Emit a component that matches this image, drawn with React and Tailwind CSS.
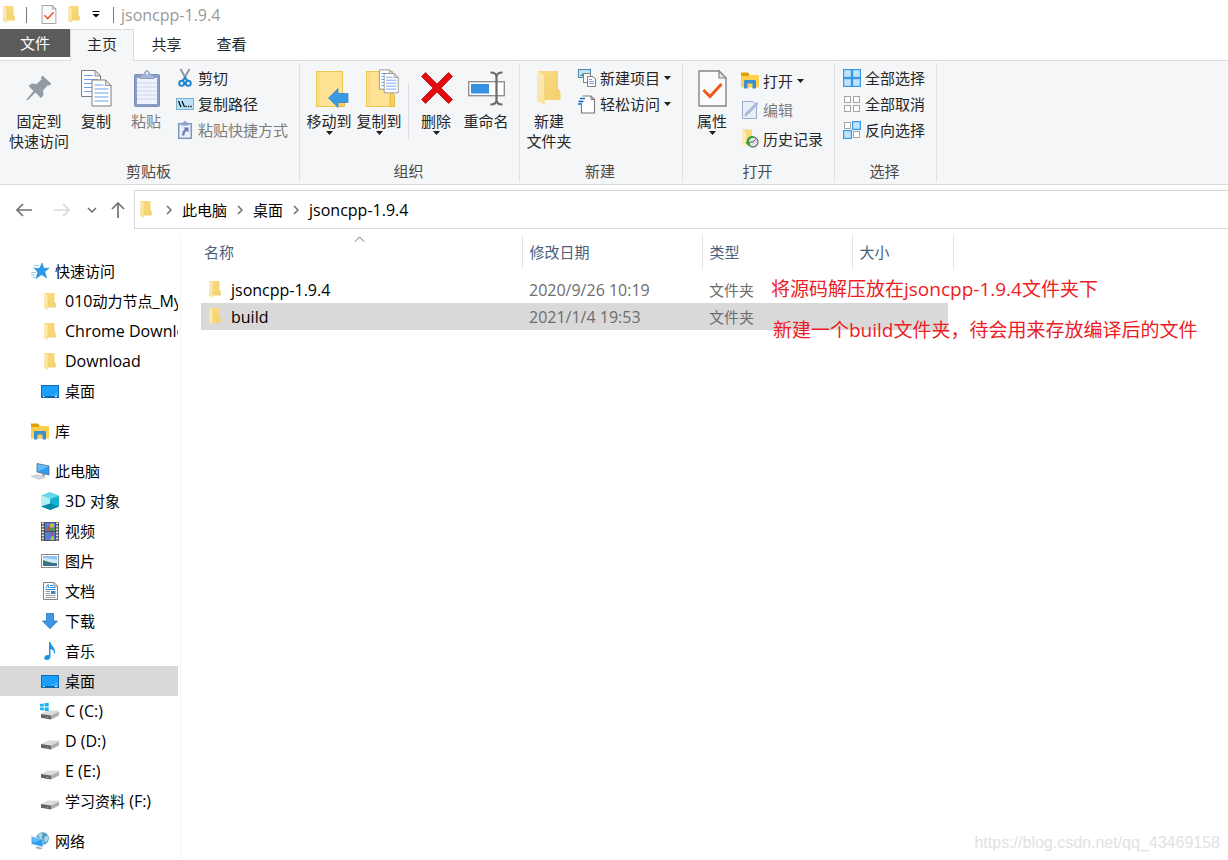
import React from 'react';

/* ---------- icons ---------- */

function Folder({ className }) {
  return (
    <svg viewBox="0 0 24 34" className={className} preserveAspectRatio="none" aria-hidden="true">
      <defs>
        <linearGradient id="fback" x1="0" y1="0" x2="1" y2="1">
          <stop offset="0" stopColor="#fbdc83" />
          <stop offset="1" stopColor="#f3d06c" />
        </linearGradient>
        <linearGradient id="fflap" x1="0" y1="0" x2="0" y2="1">
          <stop offset="0" stopColor="#fdeab6" />
          <stop offset="1" stopColor="#fbe3a0" />
        </linearGradient>
      </defs>
      <path d="M1 0H21V18L23.5 20V29H6L1 26Z" fill="url(#fback)" />
      <path d="M0 0L8 5V34L0 30Z" fill="url(#fflap)" />
      <path d="M8 5V29" stroke="#e9c45e" strokeWidth="0.8" />
    </svg>
  );
}

function CheckDoc({ className }) {
  return (
    <svg viewBox="0 0 29 37" className={className} aria-hidden="true">
      <path d="M1 1H21L28 8V36H1Z" fill="#fbfbfb" stroke="#858585" strokeWidth="1.4" />
      <path d="M21 1V8H28Z" fill="#e3e3e3" stroke="#858585" strokeWidth="1.2" />
      <path d="M5.500 20L12 26.500L23.500 14" fill="none" stroke="#ee5a1c" strokeWidth="3" />
    </svg>
  );
}

function Pin() {
  return (
    <svg viewBox="0 0 26 26" className="h-[26px] w-[26px]" aria-hidden="true">
      <path d="M16.500 0.500L25.500 9L23 10.500L21.500 10.500L17 15.500L17.500 20L15 23L9.500 17.500L1.500 25.500L0.500 24.500L7.500 16L2.500 11L5.500 8.500L10.500 9L15.500 4.500L15 2.500Z" fill="#929ca2" />
    </svg>
  );
}

function Page({ x, y }) {
  return (
    <g transform={`translate(${x} ${y})`}>
      <path d="M0.500 0.500H14L19.500 6V26.500H0.500Z" fill="#fff" stroke="#7d7d7d" />
      <path d="M14 0.500V6H19.500Z" fill="#e6e6e6" stroke="#7d7d7d" strokeWidth="0.8" />
      <path d="M3 5.500H12M3 9.500H17M3 13.500H17M3 17.500H17M3 21.500H17" stroke="#6aa0ee" strokeWidth="1.2" />
    </g>
  );
}

function Copy() {
  return (
    <svg viewBox="-1 0 32 37" className="h-[37px] w-8" aria-hidden="true">
      <Page x={0} y={0} />
      <Page x={10.500} y={9.500} />
    </svg>
  );
}

function Paste() {
  return (
    <svg viewBox="-2 0 28 37" className="h-[37px] w-7" aria-hidden="true">
      <rect x="0.500" y="4.500" width="25" height="32" rx="1" fill="#8a9dc4" stroke="#7c8fb8" />
      <rect x="3" y="8" width="20" height="26" fill="#edf2fb" />
      <path d="M3 13H23M3 17H23M3 21H23M3 25H23M3 29H23" stroke="#c9d7ee" />
      <path d="M6 8.500V5.500L10.500 4C10.500 -0.500 15.500 -0.500 15.500 4L20 5.500V8.500Z" fill="#a7b6d6" stroke="#8194bd" strokeWidth="0.800" />
      <circle cx="13" cy="3.200" r="1.200" fill="#eef2fa" />
    </svg>
  );
}

function Scissors() {
  return (
    <svg viewBox="0 0 18 20" className="h-5 w-[18px]" aria-hidden="true">
      <path d="M4.500 1L11 12.500M13.500 1L7 12.500" stroke="#8d9196" strokeWidth="1.800" fill="none" />
      <circle cx="5.700" cy="15.200" r="2.500" fill="none" stroke="#1f86cf" strokeWidth="2" />
      <circle cx="12.300" cy="15.200" r="2.500" fill="none" stroke="#1f86cf" strokeWidth="2" />
      <path d="M7 12.500L9 9.500L11 12.500" fill="none" stroke="#1f86cf" strokeWidth="1.800" />
    </svg>
  );
}

function CopyPath() {
  return (
    <svg viewBox="0 0 18 12" className="h-3 w-[18px]" aria-hidden="true">
      <rect x="0.500" y="0.500" width="17" height="11" fill="#b9e1fa" stroke="#7fb0d0" />
      <path d="M2.500 3L5 9M6 3L8.500 9" stroke="#111" strokeWidth="1.300" />
      <path d="M9.500 8.500h1.300M12 8.500h1.300M14.500 8.500h1.300" stroke="#111" strokeWidth="1.300" />
    </svg>
  );
}

function PasteLink() {
  return (
    <svg viewBox="0 0 18 20" className="h-5 w-[18px]" aria-hidden="true">
      <rect x="2.700" y="3.700" width="12.600" height="14.600" fill="#eaf0fa" stroke="#8295bf" strokeWidth="1.500" />
      <path d="M5.500 5.500V3L7.500 2.500L9 0.500L10.500 2.500L12.500 3V5.500Z" fill="#8fa1c8" />
      <path d="M12.500 7.500V12.500L10.700 10.800C9 12 8.500 13.500 8.500 15.500H6C6 12.500 7 10.500 9 9.200L7.500 7.500Z" fill="#6a80b3" />
    </svg>
  );
}

function BigFolder() {
  return (
    <>
      <rect x="0.500" y="2.500" width="26" height="35" fill="#ffe293" stroke="#e9c650" />
      <path d="M3 3V37" stroke="#f4d373" />
      <path d="M24 37.500V27C24 23.500 28.500 23.500 28.500 27V37.500Z" fill="#f7cf63" stroke="#e3ba45" />
    </>
  );
}

function MoveTo() {
  return (
    <svg viewBox="-6 0 39 39" className="h-[39px] w-[39px]" aria-hidden="true">
      <BigFolder />
      <path d="M12.500 29L22 19.500V24.500H32V33.500H22V38.500Z" fill="#3a98e6" stroke="#2b7fcb" strokeWidth="0.700" />
    </svg>
  );
}

function CopyTo() {
  return (
    <svg viewBox="-6 0 39 39" className="h-[39px] w-[39px]" aria-hidden="true">
      <BigFolder />
      <g transform="translate(13 0.500) scale(0.74)">
        <Page x={0} y={0} />
        <Page x={6.500} y={5} />
      </g>
    </svg>
  );
}

function Delete() {
  return (
    <svg viewBox="-1 0 33 32" className="h-8 w-[33px]" aria-hidden="true">
      <path d="M4.500 0.500L16 12L27.500 0.500L31.500 4.500L20 16L31.500 27.500L27.500 31.500L16 20L4.500 31.500L0.500 27.500L12 16L0.500 4.500Z" fill="#e60a0f" stroke="#b01010" strokeWidth="0.800" />
    </svg>
  );
}

function Rename() {
  return (
    <svg viewBox="-1 0 38 35" className="h-[35px] w-[38px]" aria-hidden="true">
      <rect x="0.700" y="10.700" width="35.600" height="14" fill="#fff" stroke="#8a8a8a" strokeWidth="1.300" />
      <rect x="3" y="13" width="18" height="9.500" fill="#3792e4" />
      <path d="M22.500 1.500C26 1.500 28.500 2.500 28.500 6V29C28.500 32.500 26 33.500 22.500 33.500M34.500 1.500C31 1.500 28.500 2.500 28.500 6V29C28.500 32.500 31 33.500 34.500 33.500" fill="none" stroke="#6b6b6b" strokeWidth="2.200" />
    </svg>
  );
}

function NewItem() {
  return (
    <svg viewBox="0 0 18 18" className="h-[18px] w-[18px]" aria-hidden="true">
      <rect x="0.500" y="0.500" width="12" height="8" fill="#bfe3fb" stroke="#4d87a8" />
      <path d="M2 7L5.500 4L9 7Z" fill="#3f8f6f" />
      <rect x="5.500" y="4.500" width="7" height="9" fill="#f6f6f6" stroke="#858585" />
      <path d="M9.500 7.500H15L17.500 10V17.500H9.500Z" fill="#fff" stroke="#7d7d7d" />
      <path d="M11 10.500H14M11 12.500H16M11 14.500H16" stroke="#6aa0ee" />
    </svg>
  );
}

function EasyAccess() {
  return (
    <svg viewBox="0 0 18 19" className="h-[19px] w-[18px]" aria-hidden="true">
      <path d="M4 1H13L16.500 4.500V18H4Z" fill="#fff" />
      <path d="M4.500 1H13L16.500 4.500V18H3.500V10" fill="none" stroke="#777" strokeWidth="1.100" />
      <path d="M13 1V4.500H16.500" fill="none" stroke="#777" />
      <path d="M2 3.500H7M0.500 6.500H5.500M0 9H4" stroke="#1c69b5" strokeWidth="1.300" />
    </svg>
  );
}

function LibraryFolder() {
  return (
    <svg viewBox="0 0 18 17" className="h-[17px] w-[18px]" aria-hidden="true">
      <path d="M0 1H7L9 3H18V15.500H0Z" fill="#ffcf4d" />
      <path d="M0 0.500H7L8.500 2.500L7.500 4H0Z" fill="#e0a106" />
      <path d="M3 16.500V9.500C3 8.500 3.500 8 4.500 8H13.500C14.500 8 15 8.500 15 9.500V16.500H11.500V11.500H6.500V16.500Z" fill="#3b8ed4" />
    </svg>
  );
}

function Edit() {
  return (
    <svg viewBox="0 0 18 18" className="h-[18px] w-[18px]" aria-hidden="true">
      <path d="M1.500 0.500H12L15.500 4V17.500H1.500Z" fill="#e8eef8" stroke="#9aabce" />
      <path d="M4 15L5 12L15.500 1.500L17 3L6.500 13.500Z" fill="#b2c1de" stroke="#8fa2c8" strokeWidth="0.800" />
    </svg>
  );
}

function History() {
  return (
    <svg viewBox="0 0 18 19" className="h-[19px] w-[18px]" aria-hidden="true">
      <path d="M1.500 0.500H11V9L12 16H3L1.500 14Z" fill="#f7d97e" />
      <path d="M1.500 0.500L5 3V18L1.500 16Z" fill="#fdebb8" />
      <circle cx="12" cy="13" r="5" fill="#e2e2e2" stroke="#777" strokeWidth="1.300" />
      <path d="M12 13L14.500 10.500M12 13H9.500" stroke="#555" />
      <path d="M12.500 7.800C8 7.800 6 10.500 6.500 14" fill="none" stroke="#2da02d" strokeWidth="2" />
      <path d="M4.500 13.500L9.500 12.500L8 17.500Z" fill="#2da02d" />
    </svg>
  );
}

function Squares({ on }) {
  const spots = [[0, 0], [9, 0], [0, 9], [9, 9]];
  return (
    <svg viewBox="0 0 18 18" className="h-[18px] w-[18px]" aria-hidden="true">
      {spots.map(([x, y], i) =>
        on[i] ? (
          <rect key={i} x={x + 0.600} y={y + 0.600} width="7.800" height="7.800" fill="#c0e4fc" stroke="#3a97e4" strokeWidth="1.200" />
        ) : (
          <rect key={i} x={x + 1.500} y={y + 1.500} width="6" height="6" fill="#fff" stroke="#a6a6a6" />
        )
      )}
    </svg>
  );
}

function Caret({ className = '' }) {
  return (
    <svg viewBox="0 0 7 4" className={`h-1 w-[7px] ${className}`} aria-hidden="true">
      <path d="M0 0H7L3.500 4Z" fill="#1e1e1e" />
    </svg>
  );
}

function Star() {
  return (
    <svg viewBox="0 0 18 16" className="h-4 w-[18px]" aria-hidden="true">
      <path d="M11 0L12.700 5.200H18L13.800 8.800L15.700 15L10.500 11.500L5 15.500L6.800 9.200L3.500 5.500L8.700 5.200Z" fill="#2a9ae8" stroke="#1c7cc7" strokeWidth="0.500" />
      <path d="M3 2.500H8M1.500 5H5M0.500 9.500H5M0 12H4M1.500 14.500H4" stroke="#82bdea" strokeWidth="0.900" />
    </svg>
  );
}

function DesktopIcon() {
  return (
    <svg viewBox="0 0 18 13" className="h-[13px] w-[18px]" aria-hidden="true">
      <rect x="0.500" y="0.500" width="17" height="12" fill="#1aa0fb" stroke="#0f6cb4" />
      <path d="M17 1V7L8 12H17Z" fill="#35aefd" />
      <path d="M1 11.500H17" stroke="#0b62a6" />
      <path d="M2 11.500H3.500M14 11.500H16" stroke="#fff" />
    </svg>
  );
}

function ThisPC() {
  return (
    <svg viewBox="0 0 19 17" className="h-[17px] w-[19px]" aria-hidden="true">
      <path d="M6 0.500L18 3V12L6 9Z" fill="#2e9ff0" stroke="#5c6a76" strokeWidth="0.800" />
      <path d="M6.500 1L17.500 3.300L7 8.500Z" fill="#63bcf8" />
      <path d="M11 10.500L14 11.200V13L11 12.500Z" fill="#8f999f" />
      <path d="M0 13.500L5.500 11.500L14 14L8.500 16.500Z" fill="#d4d8db" stroke="#b0b5b9" strokeWidth="0.500" />
      <path d="M11 14.500L13 13.800L14.500 14.500L12.500 15.500Z" fill="#c3c8cb" />
    </svg>
  );
}

function Cube() {
  return (
    <svg viewBox="0 0 18 18" className="h-[18px] w-[18px]" aria-hidden="true">
      <path d="M9 0L18 3.500L9 7L0 3.500Z" fill="#67d8e6" />
      <path d="M0 3.500L9 7V18L0 14.500Z" fill="#b4f0f0" />
      <path d="M18 3.500L9 7V18L18 14.500Z" fill="#17b0d2" />
      <path d="M0 14.500L9 11.500L18 14.500L9 18Z" fill="#078aa6" />
    </svg>
  );
}

function Film() {
  return (
    <svg viewBox="0 0 18 19" className="h-[19px] w-[18px]" aria-hidden="true">
      <rect width="18" height="19" fill="#4a4a4a" />
      <path d="M1.800 0.500V19M16.200 0.500V19" stroke="#f2f2f2" strokeWidth="2" strokeDasharray="1.800 1.200" />
      <rect x="4" y="0.700" width="10" height="8.300" fill="#4a80e0" />
      <rect x="4" y="10" width="10" height="8.300" fill="#4a80e0" />
      <path d="M5 8.500L8 4L9.500 8.500Z" fill="#cf4436" />
      <circle cx="11" cy="3.500" r="2.200" fill="#e8b22d" />
      <path d="M9 6H14V8.500H9Z" fill="#4f9a3e" />
      <circle cx="11" cy="12" r="1.500" fill="#cf4436" />
      <path d="M9 18L10.500 14.500H13V18Z" fill="#e8b22d" />
    </svg>
  );
}

function Picture() {
  return (
    <svg viewBox="0 0 18 14" className="h-[14px] w-[18px]" aria-hidden="true">
      <rect x="0.500" y="0.500" width="17" height="13" fill="#fff" stroke="#8c8c8c" />
      <rect x="2" y="2" width="14" height="10" fill="#8fc6f6" />
      <path d="M2 4.500C5 3 9 6 16 5.500V9H2Z" fill="#d3e9fa" />
      <path d="M2 6C5 7 8 8.500 16 9.500V10H2Z" fill="#3e7c61" />
      <rect x="2" y="9.500" width="14" height="2.500" fill="#356f9a" />
    </svg>
  );
}

function DocumentIcon() {
  return (
    <svg viewBox="0 0 15 18" className="h-[18px] w-[15px]" aria-hidden="true">
      <path d="M0.500 0.500H11L14.500 4V17.500H0.500Z" fill="#fff" stroke="#808080" />
      <path d="M11 0.500V4H14.500" fill="none" stroke="#808080" />
      <path d="M3 6L5 2.500L6 6" fill="none" stroke="#2388d6" />
      <path d="M7 3.500H10M7 5.500H12.500M2.500 7.500H12.500" stroke="#2388d6" />
      <path d="M2.500 9.500H7M2.500 11.500H7M2.500 13.500H12.500M2.500 15.500H12.500" stroke="#9b9b9b" />
      <rect x="8" y="9" width="4.500" height="3" fill="#3c86bd" />
    </svg>
  );
}

function DownloadIcon() {
  return (
    <svg viewBox="0 0 16 16" className="h-4 w-4" aria-hidden="true">
      <path d="M4.500 0.500H11.500V8H15.500L8 15.700L0.500 8H4.500Z" fill="#3b97e3" stroke="#2474bd" strokeWidth="0.800" />
    </svg>
  );
}

function Music() {
  return (
    <svg viewBox="0 0 12 18" className="h-[18px] w-3" aria-hidden="true">
      <path d="M5 0H6.500C7 4 11.500 5 11 11.500H10C10.200 8.500 8.500 7.500 6.500 7V14.500C6.500 17 4.500 18 2.700 18C0.800 18 0 16.800 0.300 15.500C0.800 13.500 3 12.700 5 13.200Z" fill="#1a93e8" />
    </svg>
  );
}

function Drive({ win }) {
  return (
    <svg viewBox="0 0 20 18" className="h-[18px] w-5" aria-hidden="true">
      <path d="M1 12L8 8.500H19V9.500L11 13.500Z" fill="#dcdcdc" />
      <path d="M1 12L11 13.500V17.500L1 15.800Z" fill="#626262" />
      <path d="M11 13.500L19 9.500V13.500L11 17.500Z" fill="#aeaeae" />
      <path d="M6.500 15.300H8.500" stroke="#48d04b" strokeWidth="1.300" />
      {win && (
        <>
          <rect x="0" y="1" width="9" height="8" fill="#fff" />
          <path d="M0 2L3.800 1.400V4.600H0ZM4.600 1.300L8.700 0.700V4.600H4.600ZM0 5.400H3.800V8.600L0 8ZM4.600 5.400H8.700V9.200L4.600 8.700Z" fill="#13b5ea" />
        </>
      )}
    </svg>
  );
}

function Network() {
  return (
    <svg viewBox="0 0 18 18" className="h-[18px] w-[18px]" aria-hidden="true">
      <circle cx="11.500" cy="6.500" r="6.300" fill="#4a9ac5" />
      <path d="M7 3C9 0 12 1 12 3C10 3.500 12 6 9 6.500ZM13 5L17 3.500V8L14 11Z" fill="#a9d5e8" />
      <path d="M0.300 4.500L12 7V15L0.300 12Z" fill="#2f9df0" stroke="#dceaf4" strokeWidth="0.700" />
      <path d="M1 5.200L11 7.300L2 11Z" fill="#66bcf7" />
      <path d="M6 14.500L12 16L9 17.500L4.500 16Z" fill="#a5adb3" />
    </svg>
  );
}

function Chevron({ className = '' }) {
  return (
    <svg viewBox="0 0 6 10" className={`h-[10px] w-[6px] ${className}`} aria-hidden="true">
      <path d="M1 1L5 5L1 9" fill="none" stroke="#6e6e6e" strokeWidth="1.500" />
    </svg>
  );
}

function Arrow({ dir, color }) {
  const d = {
    left: 'M16 8H1M7 2L1 8L7 14',
    right: 'M0 8H15M9 2L15 8L9 14',
    up: 'M8 16V1M2 7L8 1L14 7',
  }[dir];
  return (
    <svg viewBox="0 0 16 16" className="h-4 w-4" aria-hidden="true">
      <path d={d} fill="none" stroke={color} strokeWidth="1.700" />
    </svg>
  );
}

/* ---------- text: Latin runs sit one step larger than Chinese ones ---------- */

function Label({ children }) {
  return children
    .split(/([\u0020-\u007e]+)/)
    .filter(Boolean)
    .map((part, i) =>
      /^[\u0020-\u007e]/.test(part) ? (
        <span key={i} className="text-base leading-none">{part}</span>
      ) : (
        part
      )
    );
}

/* ---------- ribbon ---------- */

function Big({ icon, lines, menu, disabled, className = 'w-[50px]' }) {
  return (
    <button type="button" disabled={disabled} className={`flex shrink-0 flex-col items-center whitespace-nowrap leading-5 ${disabled ? 'text-[#7c7c7c]' : ''} ${className}`}>
      <span className="flex h-11 items-center justify-center pb-0.5">{icon}</span>
      {lines.map((line) => (
        <span key={line}>{line}</span>
      ))}
      {menu && <Caret />}
    </button>
  );
}

function Small({ icon, text, menu, disabled, className = 'h-[26px]' }) {
  return (
    <button type="button" disabled={disabled} className={`flex items-center gap-1 whitespace-nowrap leading-5 ${disabled ? 'text-[#7c7c7c]' : ''} ${className}`}>
      <span className="flex w-[18px] justify-center">{icon}</span>
      <span>{text}</span>
      {menu && <Caret />}
    </button>
  );
}

function Group({ title, className, children }) {
  return (
    <section aria-label={title} className={`flex shrink-0 flex-col border-r border-[#e0e1e3] ${className}`}>
      <div className="flex h-[98px]">{children}</div>
      <h2 className="pr-0.5 text-center leading-5 text-[#4a4a4a]">{title}</h2>
    </section>
  );
}

function Ribbon() {
  return (
    <div className="flex h-[124px] border-b border-[#dadbdc] bg-[#f5f6f8] py-0.5 text-[#262626]">
      <Group title="剪贴板" className="w-[300px]">
        <div className="flex pt-1 pl-[7px]">
          <Big icon={<Pin />} lines={['固定到', '快速访问']} className="w-16" />
          <Big icon={<Copy />} lines={['复制']} />
          <Big icon={<Paste />} lines={['粘贴']} disabled />
        </div>
        <div className="flex flex-col pt-0.5 pl-[5px]">
          <Small icon={<Scissors />} text="剪切" />
          <Small icon={<CopyPath />} text="复制路径" />
          <Small icon={<PasteLink />} text="粘贴快捷方式" disabled />
        </div>
      </Group>
      <Group title="组织" className="w-[220px]">
        <div className="flex px-1 pt-1">
          <Big icon={<MoveTo />} lines={['移动到']} menu />
          <Big icon={<CopyTo />} lines={['复制到']} menu />
          <span className="mt-4 mr-0.5 ml-1 h-14 w-px bg-[#dcdde0]" />
          <Big icon={<Delete />} lines={['删除']} menu />
          <Big icon={<Rename />} lines={['重命名']} />
        </div>
      </Group>
      <Group title="新建" className="w-[163px]">
        <div className="flex pt-1 pl-1">
          <Big icon={<Folder className="h-[34px] w-6" />} lines={['新建', '文件夹']} />
        </div>
        <div className="flex flex-col pt-0.5 pl-1">
          <Small icon={<NewItem />} text="新建项目" menu />
          <Small icon={<EasyAccess />} text="轻松访问" menu />
        </div>
      </Group>
      <Group title="打开" className="w-[152px]">
        <div className="flex pt-1 pl-1">
          <Big icon={<CheckDoc className="h-[37px] w-[29px]" />} lines={['属性']} menu />
        </div>
        <div className="flex flex-col pt-[3px] pl-1">
          <Small icon={<LibraryFolder />} text="打开" menu className="h-[29px]" />
          <Small icon={<Edit />} text="编辑" disabled className="h-[29px]" />
          <Small icon={<History />} text="历史记录" className="h-[29px]" />
        </div>
      </Group>
      <Group title="选择" className="w-[102px]">
        <div className="flex flex-col pt-0.5 pl-2">
          <Small icon={<Squares on={[1, 1, 1, 1]} />} text="全部选择" />
          <Small icon={<Squares on={[0, 0, 0, 0]} />} text="全部取消" />
          <Small icon={<Squares on={[0, 1, 1, 0]} />} text="反向选择" />
        </div>
      </Group>
    </div>
  );
}

/* ---------- sidebar ---------- */

const smallFolder = <Folder className="h-[17px] w-3" />;

const tree = [
  [
    { text: '快速访问', icon: <Star />, root: true },
    { text: '010动力节点_MyBatis', icon: smallFolder },
    { text: 'Chrome Downloads', icon: smallFolder },
    { text: 'Download', icon: smallFolder },
    { text: '桌面', icon: <DesktopIcon /> },
  ],
  [{ text: '库', icon: <LibraryFolder />, root: true }],
  [
    { text: '此电脑', icon: <ThisPC />, root: true },
    { text: '3D 对象', icon: <Cube /> },
    { text: '视频', icon: <Film /> },
    { text: '图片', icon: <Picture /> },
    { text: '文档', icon: <DocumentIcon /> },
    { text: '下载', icon: <DownloadIcon /> },
    { text: '音乐', icon: <Music /> },
    { text: '桌面', icon: <DesktopIcon />, selected: true },
    { text: 'C (C:)', icon: <Drive win /> },
    { text: 'D (D:)', icon: <Drive /> },
    { text: 'E (E:)', icon: <Drive /> },
    { text: '学习资料 (F:)', icon: <Drive /> },
  ],
  [{ text: '网络', icon: <Network />, root: true }],
];

function Sidebar() {
  return (
    <nav aria-label="导航窗格" className="w-[181px] shrink-0 border-r border-[#f3f3f3] pr-0.5">
      <div className="flex flex-col gap-[10px] pt-[21px]">
        {tree.map((section) => (
          <ul key={section[0].text}>
            {section.map((item, i) => (
              <li key={i}>
                <a
                  href="#"
                  className={`flex h-[30px] items-center gap-[5px] overflow-hidden whitespace-nowrap ${item.root ? 'pl-[30px]' : 'pl-10'} ${item.selected ? 'bg-[#d9d9d9]' : ''}`}
                >
                  <span className="flex w-5 shrink-0 justify-center">{item.icon}</span>
                  <span className="overflow-hidden leading-6"><Label>{item.text}</Label></span>
                </a>
              </li>
            ))}
          </ul>
        ))}
      </div>
    </nav>
  );
}

/* ---------- file list ---------- */

const files = [
  { name: 'jsoncpp-1.9.4', date: '2020/9/26 10:19', type: '文件夹' },
  { name: 'build', date: '2021/1/4 19:53', type: '文件夹', selected: true },
];

function FileList() {
  return (
    <div className="relative flex-1 pl-5">
      <table className="w-[752px] table-fixed border-collapse text-left">
        <colgroup>
          <col className="w-[321px]" />
          <col className="w-[180px]" />
          <col className="w-[150px]" />
          <col className="w-[101px]" />
        </colgroup>
        <thead>
          <tr className="h-[34px] text-[#4c607a]">
            {['名称', '修改日期', '类型', '大小'].map((title, i) => (
              <th key={title} scope="col" className={`relative border-r border-[#e2e2e2] p-0 font-normal leading-6 ${i === 0 ? 'pl-[3px]' : 'pl-[7px]'}`}>
                {title}
                {i === 0 && (
                  <svg viewBox="0 0 11 6" className="absolute top-px left-[153px] h-[6px] w-[11px]" aria-hidden="true">
                    <path d="M1 5.500L5.500 1L10 5.500" fill="none" stroke="#6c6c6c" />
                  </svg>
                )}
              </th>
            ))}
          </tr>
        </thead>
        <tbody className="before:block before:h-[7px]">
          {files.map((file) => {
            const bg = file.selected ? 'bg-[#d9d9d9]' : '';
            return (
              <tr key={file.name} className="h-[27px] text-[#6d6d6d]">
                <td className={`p-0 ${bg}`}>
                  <span className="flex items-center gap-[10px] pl-2 text-base leading-6 text-black">
                    <Folder className="h-[17px] w-3" />
                    {file.name}
                  </span>
                </td>
                <td className={`p-0 pl-[7px] text-base leading-6 ${bg}`}>{file.date}</td>
                <td className={`p-0 pl-[7px] leading-6 ${bg}`}>{file.type}</td>
                <td className="p-0">
                  <div className={`mr-[5px] h-[27px] ${bg}`} />
                </td>
              </tr>
            );
          })}
        </tbody>
      </table>
      <p className="absolute top-[42px] left-[590px] text-[19px] leading-6 whitespace-nowrap text-[#ed1c24]">
        将源码解压放在jsoncpp-1.9.4文件夹下
      </p>
      <p className="absolute top-[83px] left-[592px] text-[19px] leading-6 whitespace-nowrap text-[#ed1c24]">
        新建一个build文件夹，待会用来存放编译后的文件
      </p>
      <p className="absolute right-2 bottom-[5px] font-['Liberation_Sans',sans-serif] text-base leading-5 text-[#e2e2e2]">
        https://blog.csdn.net/qq_43469158
      </p>
    </div>
  );
}

/* ---------- window ---------- */

export default function App() {
  return (
    <div className="flex min-h-screen flex-col overflow-hidden bg-white font-['Open_Sans','Noto_Sans_CJK_SC',sans-serif] text-[15px] text-black">
      <header className="flex h-[29px] items-center pl-[3px]">
        <Folder className="h-[17px] w-3" />
        <span className="mr-3.5 ml-[11px] h-4 w-px bg-[#7a7a7a]" />
        <button type="button" aria-label="属性"><CheckDoc className="h-[19px] w-4" /></button>
        <button type="button" aria-label="新建文件夹" className="ml-[11px]"><Folder className="h-[17px] w-3" /></button>
        <button type="button" aria-label="自定义快速访问工具栏" className="ml-3">
          <svg viewBox="0 0 8 7" className="h-[7px] w-2" aria-hidden="true">
            <path d="M0.500 0.500H7.500" stroke="#000" />
            <path d="M0.500 3H7.500L4 6.500Z" fill="#000" />
          </svg>
        </button>
        <span className="mr-[7px] ml-[13px] h-4 w-px bg-[#7a7a7a]" />
        <h1 className="text-base leading-6 text-[#999]">jsoncpp-1.9.4</h1>
      </header>

      <div role="tablist" className="flex h-8 border-b border-[#dadbdc] leading-5 text-[#262626]">
        <button type="button" role="tab" className="h-7 w-[70px] bg-[#5b5b5b] text-white">文件</button>
        <button type="button" role="tab" aria-selected="true" className="-mb-px w-16 border border-b-0 border-[#dadbdc] bg-[#f5f6f8] pb-[3px]">主页</button>
        <button type="button" role="tab" className="w-[65px] pb-0.5">共享</button>
        <button type="button" role="tab" className="w-[65px] pb-0.5">查看</button>
      </div>

      <Ribbon />

      <div className="flex items-center pt-[5px]">
        <button type="button" aria-label="返回" className="ml-4"><Arrow dir="left" color="#737373" /></button>
        <button type="button" aria-label="前进" className="ml-[22px]"><Arrow dir="right" color="#d9d9d9" /></button>
        <button type="button" aria-label="最近浏览的位置" className="ml-[19px]"><Chevron className="rotate-90" /></button>
        <button type="button" aria-label="上移" className="ml-[15px]"><Arrow dir="up" color="#737373" /></button>
        <div className="ml-2 flex h-[39px] flex-1 items-center border border-r-0 border-[#d9d9d9] pl-[5px] whitespace-nowrap">
          <Folder className="h-[17px] w-3" />
          {['此电脑', '桌面', 'jsoncpp-1.9.4'].map((part, i) => (
            <React.Fragment key={part}>
              <Chevron className={i === 0 ? 'mr-[10px] ml-3.5' : 'mx-[10px]'} />
              <button type="button" className="leading-6"><Label>{part}</Label></button>
            </React.Fragment>
          ))}
        </div>
      </div>

      <main className="flex flex-1 pt-[6px] pb-0.5">
        <Sidebar />
        <FileList />
      </main>
    </div>
  );
}
